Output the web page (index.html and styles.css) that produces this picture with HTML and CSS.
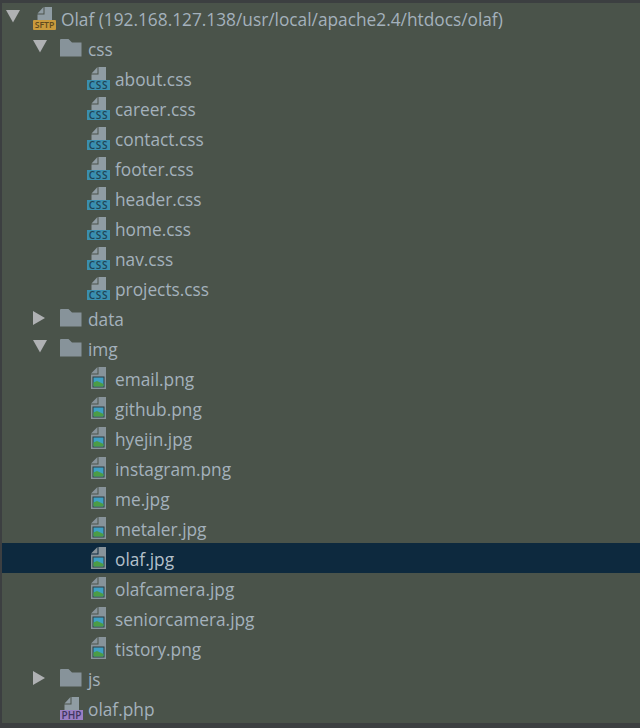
FILE: index.html
```html
<!DOCTYPE html>
<html lang="en">
<head>
<meta charset="utf-8">
<title>Olaf project tree</title>
<link rel="stylesheet" href="styles.css">
</head>
<body>
<svg class="defs" width="0" height="0" aria-hidden="true">
  <defs>
    <symbol id="arrow-down" viewBox="0 0 14 13"><path d="M0 0H14L7 12.500Z"/></symbol>
    <symbol id="arrow-right" viewBox="0 0 13 14"><path d="M0 0L12 7L0 14Z"/></symbol>
    <symbol id="folder" viewBox="0 0 22 18"><path d="M0 1Q0 0 1 0H8.500L12 3.500H21.500V17.500H0Z"/></symbol>
    <symbol id="doc" viewBox="0 0 23 24"><path class="page" d="M11.500 1H19V14H4.500V8.500H11.500Z"/><path class="page" d="M4.500 7.500L10.500 1V7.500Z"/></symbol>
    <symbol id="image" viewBox="0 0 23 24">
      <path class="img-page" d="M4 7.500L10.500 1V7.500Z"/>
      <path class="img-page" d="M11.500 1H19V23H4V8.500H11.500Z"/>
      <rect class="img-frame" x="5.500" y="10.500" width="12" height="11"/>
      <rect class="img-sky" x="6.500" y="11.500" width="10" height="9"/>
      <path class="img-hill" d="M6.500 20.500V16.500L10 15L16.500 18V20.500Z"/>
    </symbol>
  </defs>
</svg>
<main class="tree">
  <div class="row level-0"><span class="arrow"><svg class="tri-down"><use href="#arrow-down"/></svg></span><span class="icon"><svg class="file" viewBox="0 0 23 24"><use href="#doc"/><rect class="badge-sftp" y="14" width="23" height="10" rx="1"/><text class="badge-text text-sftp" x="11.500" y="22.300">SFTP</text></svg></span><span class="label">Olaf (192.168.127.138/usr/local/apache2.4/htdocs/olaf)</span></div>
  <div class="row level-1"><span class="arrow"><svg class="tri-down"><use href="#arrow-down"/></svg></span><span class="icon"><svg class="folder"><use href="#folder"/></svg></span><span class="label">css</span></div>
  <div class="row level-2"><span class="arrow"></span><span class="icon"><svg class="file" viewBox="0 0 23 24"><use href="#doc"/><rect class="badge-css" y="14" width="23" height="10"/><text class="badge-text text-css" x="11.500" y="22.500">CSS</text></svg></span><span class="label">about.css</span></div>
  <div class="row level-2"><span class="arrow"></span><span class="icon"><svg class="file" viewBox="0 0 23 24"><use href="#doc"/><rect class="badge-css" y="14" width="23" height="10"/><text class="badge-text text-css" x="11.500" y="22.500">CSS</text></svg></span><span class="label">career.css</span></div>
  <div class="row level-2"><span class="arrow"></span><span class="icon"><svg class="file" viewBox="0 0 23 24"><use href="#doc"/><rect class="badge-css" y="14" width="23" height="10"/><text class="badge-text text-css" x="11.500" y="22.500">CSS</text></svg></span><span class="label">contact.css</span></div>
  <div class="row level-2"><span class="arrow"></span><span class="icon"><svg class="file" viewBox="0 0 23 24"><use href="#doc"/><rect class="badge-css" y="14" width="23" height="10"/><text class="badge-text text-css" x="11.500" y="22.500">CSS</text></svg></span><span class="label">footer.css</span></div>
  <div class="row level-2"><span class="arrow"></span><span class="icon"><svg class="file" viewBox="0 0 23 24"><use href="#doc"/><rect class="badge-css" y="14" width="23" height="10"/><text class="badge-text text-css" x="11.500" y="22.500">CSS</text></svg></span><span class="label">header.css</span></div>
  <div class="row level-2"><span class="arrow"></span><span class="icon"><svg class="file" viewBox="0 0 23 24"><use href="#doc"/><rect class="badge-css" y="14" width="23" height="10"/><text class="badge-text text-css" x="11.500" y="22.500">CSS</text></svg></span><span class="label">home.css</span></div>
  <div class="row level-2"><span class="arrow"></span><span class="icon"><svg class="file" viewBox="0 0 23 24"><use href="#doc"/><rect class="badge-css" y="14" width="23" height="10"/><text class="badge-text text-css" x="11.500" y="22.500">CSS</text></svg></span><span class="label">nav.css</span></div>
  <div class="row level-2"><span class="arrow"></span><span class="icon"><svg class="file" viewBox="0 0 23 24"><use href="#doc"/><rect class="badge-css" y="14" width="23" height="10"/><text class="badge-text text-css" x="11.500" y="22.500">CSS</text></svg></span><span class="label">projects.css</span></div>
  <div class="row level-1"><span class="arrow"><svg class="tri-right"><use href="#arrow-right"/></svg></span><span class="icon"><svg class="folder"><use href="#folder"/></svg></span><span class="label">data</span></div>
  <div class="row level-1"><span class="arrow"><svg class="tri-down"><use href="#arrow-down"/></svg></span><span class="icon"><svg class="folder"><use href="#folder"/></svg></span><span class="label">img</span></div>
  <div class="row level-2"><span class="arrow"></span><span class="icon"><svg class="file"><use href="#image"/></svg></span><span class="label">email.png</span></div>
  <div class="row level-2"><span class="arrow"></span><span class="icon"><svg class="file"><use href="#image"/></svg></span><span class="label">github.png</span></div>
  <div class="row level-2"><span class="arrow"></span><span class="icon"><svg class="file"><use href="#image"/></svg></span><span class="label">hyejin.jpg</span></div>
  <div class="row level-2"><span class="arrow"></span><span class="icon"><svg class="file"><use href="#image"/></svg></span><span class="label">instagram.png</span></div>
  <div class="row level-2"><span class="arrow"></span><span class="icon"><svg class="file"><use href="#image"/></svg></span><span class="label">me.jpg</span></div>
  <div class="row level-2"><span class="arrow"></span><span class="icon"><svg class="file"><use href="#image"/></svg></span><span class="label">metaler.jpg</span></div>
  <div class="row level-2 selected"><span class="arrow"></span><span class="icon"><svg class="file"><use href="#image"/></svg></span><span class="label">olaf.jpg</span></div>
  <div class="row level-2"><span class="arrow"></span><span class="icon"><svg class="file"><use href="#image"/></svg></span><span class="label">olafcamera.jpg</span></div>
  <div class="row level-2"><span class="arrow"></span><span class="icon"><svg class="file"><use href="#image"/></svg></span><span class="label">seniorcamera.jpg</span></div>
  <div class="row level-2"><span class="arrow"></span><span class="icon"><svg class="file"><use href="#image"/></svg></span><span class="label">tistory.png</span></div>
  <div class="row level-1"><span class="arrow"><svg class="tri-right"><use href="#arrow-right"/></svg></span><span class="icon"><svg class="folder"><use href="#folder"/></svg></span><span class="label">js</span></div>
  <div class="row level-1"><span class="arrow"></span><span class="icon"><svg class="file" viewBox="0 0 23 24"><use href="#doc"/><rect class="badge-php" y="14" width="23" height="10"/><text class="badge-text text-php" x="11.500" y="22.500">PHP</text></svg></span><span class="label">olaf.php</span></div>
</main>
</body>
</html>
```
FILE: styles.css
```css
html, body {
  margin: 0;
  height: 100%;
}
body {
  background: #3c3f41;
  overflow: hidden;
}
.defs {
  display: block;
  height: 0;
}
.tree {
  margin: 3px 0 0 2px;
  height: 720px;
  background: #4a534a;
  font-family: "Open Sans", "Noto Sans", sans-serif;
  font-size: 17.300px;
  color: #a4b1bc;
}
.row {
  display: flex;
  align-items: center;
  height: 30px;
  white-space: nowrap;
}
.level-0 { padding-left: 4px; }
.level-1 { padding-left: 31px; }
.level-2 { padding-left: 58px; }
.selected {
  background: #0d293e;
  color: #b4c0cb;
}
.label {
  padding-top: 2px;
}
.arrow {
  flex: none;
  display: flex;
  width: 27px;
  height: 14px;
  align-items: center;
}
.tri-down {
  width: 14px;
  height: 13px;
  margin-top: -4px;
  fill: #afb1b3;
}
.tri-right {
  width: 13px;
  height: 14px;
  fill: #afb1b3;
}
.icon {
  flex: none;
  display: flex;
  width: 28px;
  align-items: center;
}
.folder {
  width: 22px;
  height: 18px;
  fill: #87939a;
}
.file {
  width: 23px;
  height: 24px;
}
.page { fill: #8f9ca3; }
.img-page { fill: #87939a; }
.img-frame { fill: #2f3d40; }
.img-sky { fill: #3f9fc4; }
.img-hill { fill: #4c9c45; }
.badge-sftp { fill: #c99a3c; }
.badge-css { fill: #3a8fb0; }
.badge-php { fill: #9a7fc4; }
.badge-text {
  font-family: "Open Sans", sans-serif;
  font-weight: 600;
  text-anchor: middle;
}
.text-sftp {
  font-size: 8.700px;
  fill: #5f4a1e;
}
.text-css {
  font-size: 10px;
  letter-spacing: 0.700px;
  fill: #1f4456;
}
.text-php {
  font-size: 10px;
  fill: #3f3560;
}
```
